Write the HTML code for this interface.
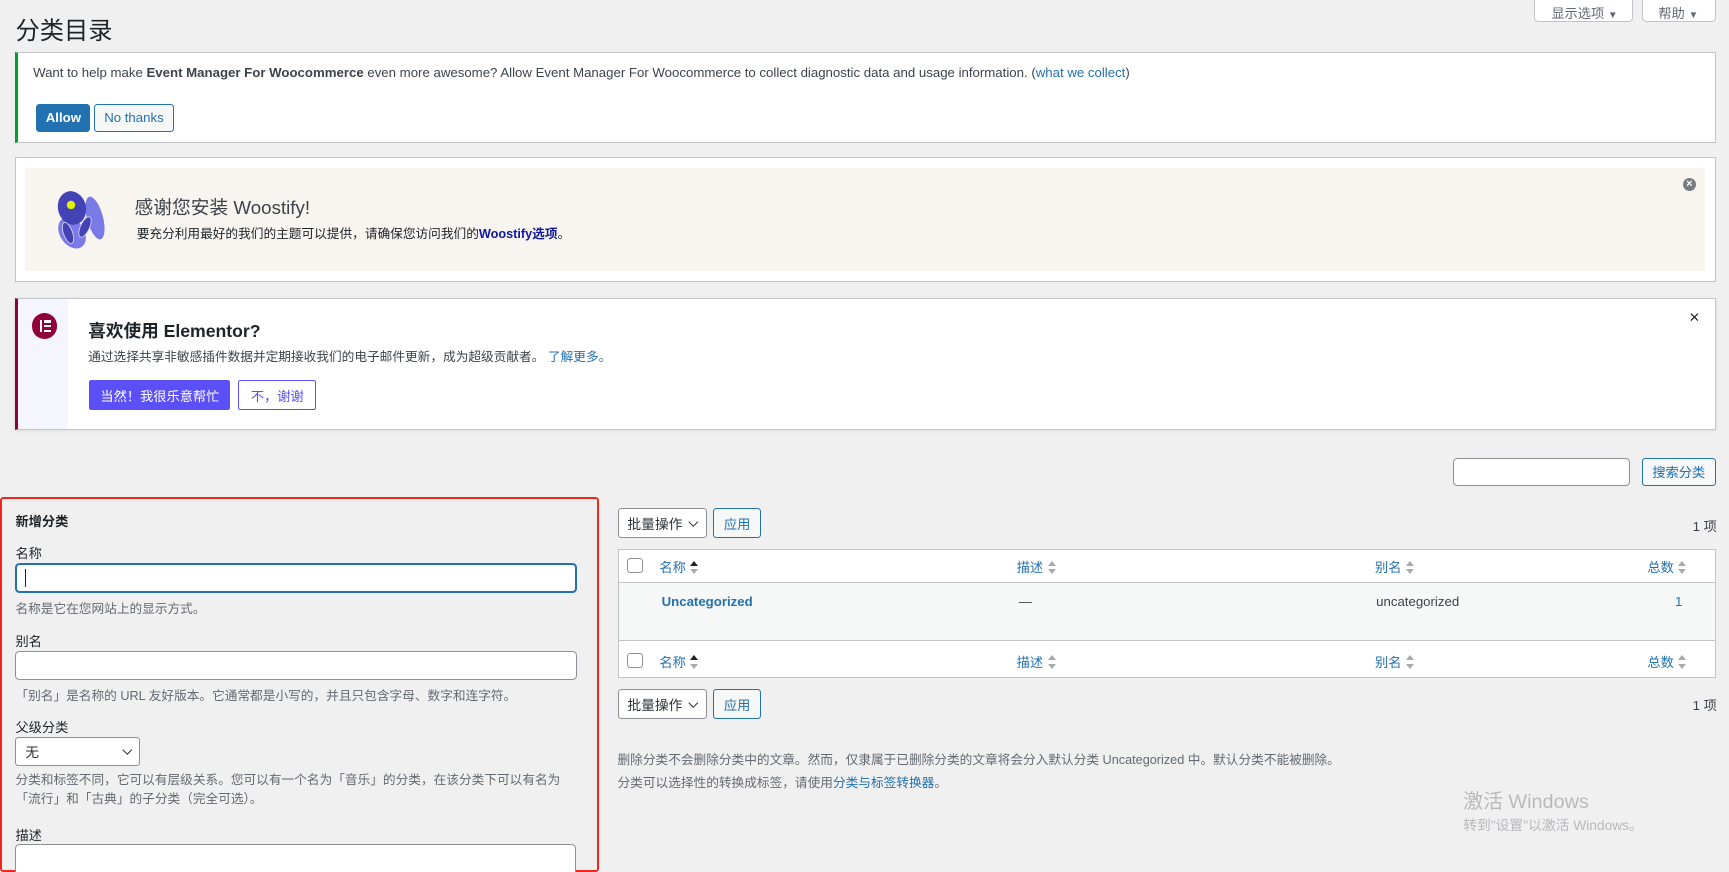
<!DOCTYPE html>
<html><head><meta charset="utf-8"><style>
*{box-sizing:border-box;margin:0;padding:0}
html,body{width:1729px;height:872px;overflow:hidden;background:#f0f0f1}
#w{zoom:1.10268;position:relative;width:1568px;height:791px;font-family:"Liberation Sans","Noto Sans CJK SC",sans-serif;color:#3c434a;font-size:12px}
.a{position:absolute;white-space:nowrap}
.btn{position:absolute;border:1px solid #2271b1;border-radius:3px;color:#2271b1;background:#f6f7f7;font-size:12px;display:flex;align-items:center;justify-content:center}
.inp{position:absolute;background:#fff;border:1px solid #8c8f94;border-radius:4px}
.lnk{color:#2271b1}
.sort{display:inline-block;width:8px;vertical-align:middle;margin-left:4px;position:relative;height:14px}
.sort:before{content:"";position:absolute;left:0;top:0;border:4px solid transparent;border-bottom:5px solid #a7aaad;border-top:0}
.sort:after{content:"";position:absolute;left:0;top:8px;border:4px solid transparent;border-top:5px solid #a7aaad;border-bottom:0}
.sort.up:before{border-bottom-color:#1d2327}
.cb{position:absolute;width:14px;height:14px;border:1px solid #8c8f94;border-radius:3px;background:#fff}
.sel{position:absolute;background:#fff;border:1px solid #8c8f94;border-radius:3px;font-size:12.5px;color:#2c3338;padding-left:8px;display:flex;align-items:center}
.chev{position:absolute;right:8px;top:50%;width:6px;height:6px;border-right:1.5px solid #2c3338;border-bottom:1.5px solid #2c3338;transform:translateY(-70%) rotate(45deg)}
</style></head><body><div id="w">
<div class="a" style="left:14px;top:10px;font-size:22px;color:#1d2327">分类目录</div>
<div class="a" style="left:1391px;top:-3px;width:90px;height:23px;background:#fff;border:1px solid #c3c4c7;border-radius:0 0 4px 4px;font-size:12px;color:#646970;padding:5px 0 0 15px">显示选项 <span style="font-size:9px">▼</span></div>
<div class="a" style="left:1489px;top:-3px;width:67px;height:23px;background:#fff;border:1px solid #c3c4c7;border-radius:0 0 4px 4px;font-size:12px;color:#646970;padding:5px 0 0 14px">帮助 <span style="font-size:9px">▼</span></div>

<div class="a" style="left:14px;top:47px;width:1542px;height:83px;background:#fff;border:1px solid #c3c4c7;border-left:3px solid #00a32a"></div>
<div class="a" style="left:30px;top:59px;font-size:12px;color:#3c434a">Want to help make <b>Event Manager For Woocommerce</b> even more awesome? Allow Event Manager For Woocommerce to collect diagnostic data and usage information. (<span class="lnk">what we collect</span>)</div>
<div class="btn" style="left:33px;top:94px;width:49px;height:26px;background:#2271b1;color:#fff;font-weight:bold">Allow</div>
<div class="btn" style="left:85px;top:94px;width:73px;height:26px">No thanks</div>

<div class="a" style="left:14px;top:142px;width:1542px;height:114px;background:#fff;border:1px solid #c3c4c7"></div>
<div class="a" style="left:23px;top:152px;width:1523px;height:94px;background:#f8f4ef"></div>
<svg class="a" style="left:45.3px;top:170.5px" width="54.4" height="58" viewBox="50 188 60 64">
<ellipse cx="95" cy="218" rx="8" ry="22" fill="#7b7be8" transform="rotate(-15 95 218)"/>
<ellipse cx="72" cy="233" rx="12" ry="17" fill="#7b7be8" transform="rotate(-35 72 233)"/>
<ellipse cx="72" cy="208" rx="14" ry="17" fill="#4343b5" transform="rotate(-15 72 208)"/>
<ellipse cx="68" cy="233" rx="4.5" ry="11" fill="#4343b5" stroke="#d8d8f6" stroke-width="0.8" transform="rotate(-20 68 233)"/>
<ellipse cx="85" cy="227" rx="4.5" ry="11" fill="#4343b5" stroke="#d8d8f6" stroke-width="0.8" transform="rotate(25 85 227)"/>
<circle cx="71" cy="205" r="4.2" fill="#e4f000"/>
</svg>
<div class="a" style="left:122px;top:175px;font-size:17px;color:#3c434a">感谢您安装 Woostify!</div>
<div class="a" style="left:124px;top:202px;font-size:11.5px;color:#1d2327">要充分利用最好的我们的主题可以提供，请确保您访问我们的<b style="color:#0e19a0">Woostify选项</b>。</div>
<div class="a" style="left:1526px;top:161px;width:12px;height:12px;border-radius:50%;background:#787c82;color:#fff;font-size:10px;line-height:12px;text-align:center;font-weight:bold">×</div>

<div class="a" style="left:14px;top:270px;width:1542px;height:120px;background:#fff;border:1px solid #c3c4c7;border-left:3px solid #93003c;box-shadow:0 1px 4px rgba(0,0,0,.08)"></div>
<div class="a" style="left:17px;top:271px;width:45px;height:118px;background:#f5f6fd"></div>
<div class="a" style="left:29px;top:284px;width:23px;height:23px;border-radius:50%;background:#92003b"></div>
<div class="a" style="left:36px;top:290px;width:2.5px;height:11px;background:#fff"></div>
<div class="a" style="left:40px;top:290px;width:6px;height:2.5px;background:#fff"></div>
<div class="a" style="left:40px;top:294.5px;width:6px;height:2.5px;background:#fff"></div>
<div class="a" style="left:40px;top:299px;width:6px;height:2.5px;background:#fff"></div>
<div class="a" style="left:80px;top:288px;font-size:16px;font-weight:bold;color:#1d2327">喜欢使用 Elementor?</div>
<div class="a" style="left:80px;top:314px;font-size:11.5px;color:#3c434a">通过选择共享非敏感插件数据并定期接收我们的电子邮件更新，成为超级贡献者。 <span class="lnk">了解更多。</span></div>
<div class="a" style="left:81px;top:345px;width:128px;height:27px;background:#5b4ff7;border-radius:2px;color:#fff;font-size:12px;display:flex;align-items:center;justify-content:center">当然！我很乐意帮忙</div>
<div class="a" style="left:216px;top:345px;width:71px;height:27px;border:1px solid #5b4ff7;border-radius:2px;color:#5b4ff7;font-size:12px;display:flex;align-items:center;justify-content:center;background:#fff">不，谢谢</div>
<div class="a" style="left:1532px;top:278px;font-size:16px;color:#1d2327">×</div>

<div class="inp" style="left:1318px;top:415px;width:160px;height:26px"></div>
<div class="btn" style="left:1489px;top:415px;width:67px;height:26px">搜索分类</div>

<div class="a" style="left:0px;top:451px;width:543px;height:340px;border:2px solid #f3261d;border-radius:3px"></div>
<div class="a" style="left:14px;top:463px;font-size:12px;font-weight:bold;color:#1d2327">新增分类</div>
<div class="a" style="left:14px;top:492px;font-size:12px;color:#1d2327">名称</div>
<div class="inp" style="left:14px;top:511px;width:509px;height:27px;border:2px solid #2271b1"></div>
<div class="a" style="left:23px;top:516px;width:1px;height:16px;background:#1d2327"></div>
<div class="a" style="left:14px;top:542px;font-size:11.5px;color:#646970">名称是它在您网站上的显示方式。</div>
<div class="a" style="left:14px;top:572px;font-size:12px;color:#1d2327">别名</div>
<div class="inp" style="left:14px;top:590px;width:509px;height:27px"></div>
<div class="a" style="left:14px;top:621px;font-size:11.5px;color:#646970">「别名」是名称的 URL 友好版本。它通常都是小写的，并且只包含字母、数字和连字符。</div>
<div class="a" style="left:14px;top:650px;font-size:12px;color:#1d2327">父级分类</div>
<div class="sel" style="left:14px;top:668px;width:113px;height:27px">无<span class="chev"></span></div>
<div class="a" style="left:14px;top:699px;font-size:11.5px;color:#646970;line-height:17px">分类和标签不同，它可以有层级关系。您可以有一个名为「音乐」的分类，在该分类下可以有名为<br>「流行」和「古典」的子分类（完全可选）。</div>
<div class="a" style="left:14px;top:748px;font-size:12px;color:#1d2327">描述</div>
<div class="inp" style="left:14px;top:765px;width:508px;height:40px;border-bottom:none;border-radius:4px 4px 0 0"></div>

<div class="sel" style="left:560px;top:461px;width:81px;height:27px">批量操作<span class="chev"></span></div>
<div class="btn" style="left:647px;top:461px;width:43px;height:27px">应用</div>
<div class="a" style="left:1535px;top:468px;font-size:12px;color:#3c434a">1 项</div>

<div class="a" style="left:560px;top:498px;width:996px;height:117px;background:#fff;border:1px solid #c3c4c7"></div>
<div class="a" style="left:561px;top:528px;width:994px;height:53px;background:#f6f7f7;border-top:1px solid #c3c4c7;border-bottom:1px solid #c3c4c7"></div>
<div class="cb" style="left:569px;top:506px"></div>
<div class="a lnk" style="left:598px;top:505px;font-size:12px">名称<span class="sort up"></span></div>
<div class="a lnk" style="left:922px;top:505px;font-size:12px">描述<span class="sort"></span></div>
<div class="a lnk" style="left:1247px;top:505px;font-size:12px">别名<span class="sort"></span></div>
<div class="a lnk" style="left:1494px;top:505px;font-size:12px">总数<span class="sort"></span></div>
<div class="a lnk" style="left:600px;top:539px;font-size:12px;font-weight:bold">Uncategorized</div>
<div class="a" style="left:924px;top:539px;font-size:12px">—</div>
<div class="a" style="left:1248px;top:539px;font-size:12px">uncategorized</div>
<div class="a lnk" style="left:1519px;top:539px;font-size:12px">1</div>
<div class="cb" style="left:569px;top:592px"></div>
<div class="a lnk" style="left:598px;top:591px;font-size:12px">名称<span class="sort up"></span></div>
<div class="a lnk" style="left:922px;top:591px;font-size:12px">描述<span class="sort"></span></div>
<div class="a lnk" style="left:1247px;top:591px;font-size:12px">别名<span class="sort"></span></div>
<div class="a lnk" style="left:1494px;top:591px;font-size:12px">总数<span class="sort"></span></div>

<div class="sel" style="left:560px;top:625px;width:81px;height:27px">批量操作<span class="chev"></span></div>
<div class="btn" style="left:647px;top:625px;width:43px;height:27px">应用</div>
<div class="a" style="left:1535px;top:630px;font-size:12px;color:#3c434a">1 项</div>

<div class="a" style="left:560px;top:679px;font-size:11.5px;color:#646970">删除分类不会删除分类中的文章。然而，仅隶属于已删除分类的文章将会分入默认分类 Uncategorized 中。默认分类不能被删除。</div>
<div class="a" style="left:560px;top:700px;font-size:11.5px;color:#646970">分类可以选择性的转换成标签，请使用<span class="lnk">分类与标签转换器</span>。</div>

<div class="a" style="left:1327px;top:712px;font-size:18px;color:#b8b9bb">激活 Windows</div>
<div class="a" style="left:1327px;top:738px;font-size:12.5px;color:#b8b9bb">转到"设置"以激活 Windows。</div>
</div></body></html>
